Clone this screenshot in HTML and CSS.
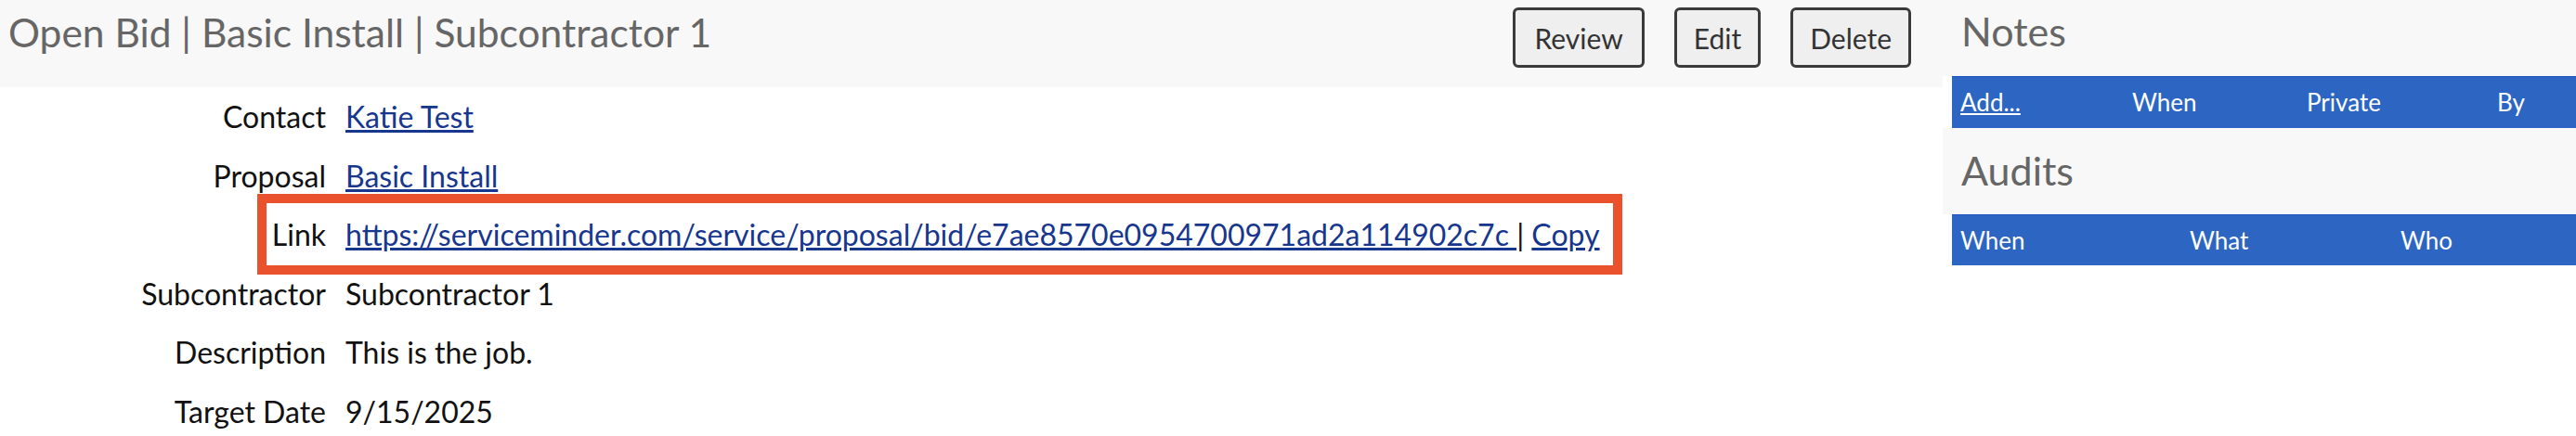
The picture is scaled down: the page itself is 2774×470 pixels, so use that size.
FILE: index.html
```html
<!DOCTYPE html>
<html lang="en">
  <head>
    <meta charset="UTF-8" />
    <meta name="viewport" content="width=device-width, initial-scale=1.0" />
    <title>Open Bid</title>
    <link rel="stylesheet" href="styles.css">
  </head>
  <body>
    <div class="page">
      <main class="bid">
        <header class="bid-header">
          <h1 class="bid-title">Open Bid | Basic Install | Subcontractor 1</h1>
          <div class="bid-actions">
            <button class="btn" type="button">Review</button>
            <button class="btn" type="button">Edit</button>
            <button class="btn" type="button">Delete</button>
          </div>
        </header>
        <dl class="details">
          <div class="detail-row">
            <dt>Contact</dt>
            <dd><a href="#">Katie Test</a></dd>
          </div>
          <div class="detail-row">
            <dt>Proposal</dt>
            <dd><a href="#">Basic Install</a></dd>
          </div>
          <div class="detail-row detail-row-marked">
            <dt>Link</dt>
            <dd><a href="#">https://serviceminder.com/service/proposal/bid/e7ae8570e0954700971ad2a114902c7c </a> | <a href="#">Copy</a></dd>
          </div>
          <div class="detail-row">
            <dt>Subcontractor</dt>
            <dd>Subcontractor 1</dd>
          </div>
          <div class="detail-row">
            <dt>Description</dt>
            <dd>This is the job.</dd>
          </div>
          <div class="detail-row">
            <dt>Target Date</dt>
            <dd>9/15/2025</dd>
          </div>
        </dl>
      </main>
      <aside class="sidebar">
        <section class="panel">
          <h2 class="panel-title panel-title-first">Notes</h2>
          <table class="panel-table notes-table">
            <thead>
              <tr>
                <th><a href="#">Add...</a></th>
                <th>When</th>
                <th>Private</th>
                <th>By</th>
              </tr>
            </thead>
          </table>
        </section>
        <section class="panel">
          <h2 class="panel-title">Audits</h2>
          <table class="panel-table audits-table">
            <thead>
              <tr>
                <th>When</th>
                <th>What</th>
                <th>Who</th>
              </tr>
            </thead>
          </table>
        </section>
      </aside>
    </div>
  </body>
</html>
```

FILE: styles.css
```css
* {
  box-sizing: border-box;
  margin: 0;
  padding: 0;
}

body {
  background: #fff;
  color: #111;
  font-family: Lato, 'Open Sans', sans-serif;
  font-size: 32px;
}

a {
  color: #17368e;
}

.page {
  display: flex;
  align-items: flex-start;
}

.bid {
  flex: 1;
}

.bid-header {
  display: flex;
  align-items: flex-start;
  justify-content: space-between;
  height: 94px;
  padding: 8px 34px 0 9px;
  background: #f8f8f8;
}

.bid-title {
  margin-top: 1px;
  color: #666;
  font-size: 42.5px;
  font-weight: normal;
  line-height: 1.2;
}

.bid-actions {
  display: flex;
  gap: 32px;
}

.btn {
  height: 65px;
  padding: 0 18px;
  border: 3px solid #3a3a3a;
  border-radius: 6px;
  background: #efefef;
  color: #333;
  font-family: inherit;
  font-size: 30px;
}

.btn:first-child {
  padding: 0 20px;
}

.details {
  padding-top: 0;
}

.detail-row {
  display: grid;
  grid-template-columns: 351px auto;
  column-gap: 21px;
  width: fit-content;
  line-height: 63.5px;
}

.detail-row dt {
  text-align: right;
}

.detail-row-marked {
  position: relative;
}

.detail-row-marked::after {
  content: '';
  position: absolute;
  top: -12px;
  bottom: -11px;
  left: 277px;
  right: -24px;
  border: 10px solid #e9522d;
}

.sidebar {
  width: 682px;
}

.panel-title {
  height: 93px;
  padding: 20px 0 0 20px;
  background: #f8f8f8;
  color: #666;
  font-size: 43px;
  font-weight: normal;
  line-height: 1.2;
}

.panel-title-first {
  height: 82px;
  padding-top: 8px;
}

.panel-table {
  width: 672px;
  margin-left: 10px;
  border-collapse: collapse;
  table-layout: fixed;
  background: #2c66c2;
  border-top: 1px solid #1c52bd;
  color: #fff;
  font-size: 26px;
}

.panel-table th {
  height: 55px;
  padding: 0 0 0 9px;
  font-weight: normal;
  text-align: left;
}

.panel-table a {
  color: #fff;
}

.notes-table th:nth-child(1) { width: 185px; }
.notes-table th:nth-child(2) { width: 188px; }
.notes-table th:nth-child(3) { width: 205px; }

.audits-table th:nth-child(1) { width: 247px; }
.audits-table th:nth-child(2) { width: 227px; }
```
